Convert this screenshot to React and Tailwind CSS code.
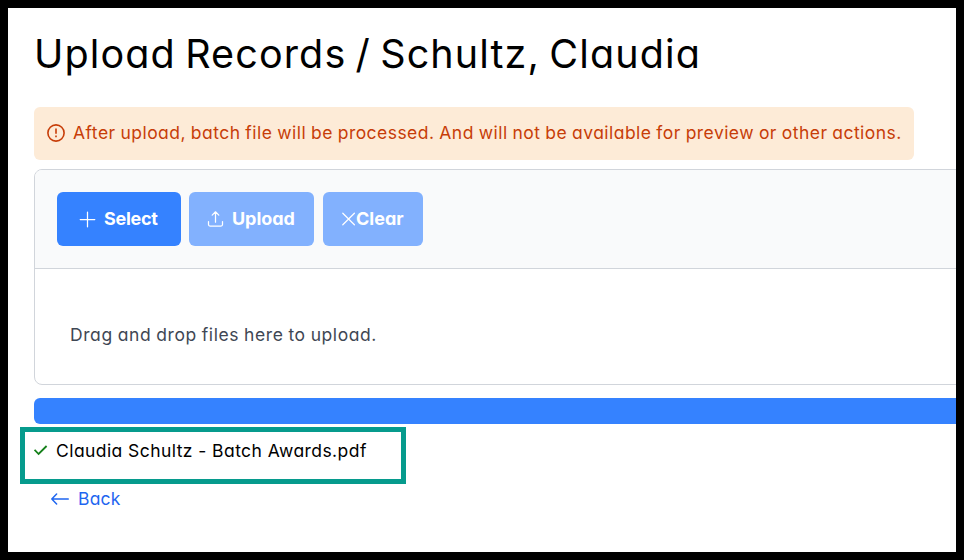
import clsx from 'clsx';

const ICONS = {
  plus: <path d="M8.5 1.2v14.6M1.2 8.5h14.6" />,
  upload: <path d="M1.5 10.5v3.1c0 .9.6 1.5 1.5 1.5h11c.9 0 1.5-.6 1.5-1.5v-3.1M8.5 11.2V1M5.2 4.1 8.5.8l3.3 3.3" />,
  times: <path d="M1.8 2.2l11.6 11.6M13.4 2.2L1.8 13.8" />,
};

function ActionButton({ icon, label, disabled, className, textClass }) {
  return (
    <button
      disabled={disabled}
      className={clsx(
        'flex h-[54px] items-center rounded-md text-white',
        disabled ? 'bg-[#82b1fe]' : 'bg-[#3582ff]',
        className
      )}
    >
      <svg
        viewBox="0 0 16 16"
        className="h-4 w-4 shrink-0 overflow-visible"
        fill="none"
        stroke="currentColor"
        strokeWidth="1.25"
        strokeLinecap="round"
        strokeLinejoin="round"
      >
        {ICONS[icon]}
      </svg>
      <span className={clsx('-mt-px whitespace-nowrap pb-px text-[18px] font-bold', textClass)}>
        {label}
      </span>
    </button>
  );
}

function Notice() {
  return (
    <div className="mt-[29px] flex h-[53px] w-[880px] items-center rounded-md bg-[#fdebd7] pl-[13px] text-[#c73d08]">
      <svg viewBox="0 0 18 18" className="-mt-px h-[18px] w-[18px] shrink-0" fill="none" stroke="currentColor" strokeWidth="1.6">
        <circle cx="9" cy="9" r="8.1" />
        <path d="M9 4.6v5.2M9 11.4v1.8" />
      </svg>
      <span className="ml-2 whitespace-nowrap text-[17.5px] tracking-[0.46px] [word-spacing:-0.5px]">
        After upload, batch file will be processed. And will not be available for preview or other actions.
      </span>
    </div>
  );
}

export default function App() {
  return (
    <div className="h-[560px] w-[964px] overflow-hidden border-8 border-black bg-white pl-[26px] font-['Inter',sans-serif] text-black [font-feature-settings:'cv11']">
      <h1 className="mt-[16px] h-[54px] whitespace-nowrap text-[39.5px] leading-[60px] font-normal tracking-[1.12px] [word-spacing:-3px]">
        Upload Records / Schultz, Claudia
      </h1>

      <Notice />

      <div className="mt-[9px] h-[216px] w-[960px] overflow-hidden rounded-lg border border-[#d1d5db]">
        <div className="flex h-[99px] items-start border-b border-[#d1d5db] bg-[#f9fafb] pt-[22px] pl-[22px]">
          <ActionButton icon="plus" label="Select" className="w-[124px] pl-[22px]" textClass="ml-[9px] tracking-[-0.3px]" />
          <ActionButton icon="upload" label="Upload" disabled className="ml-2 w-[125px] pl-[18px]" textClass="ml-[9px] tracking-[-0.05px]" />
          <ActionButton icon="times" label="Clear" disabled className="ml-[9px] w-[100px] pl-[18px]" textClass="-ml-px" />
        </div>
        <p className="mt-[52px] ml-[35px] text-[17.5px] leading-[27px] tracking-[0.58px] text-[#3f4754] [word-spacing:-0.5px]">
          Drag and drop files here to upload.
        </p>
      </div>

      <div className="mt-[13px] h-[26px] w-[960px] rounded-md bg-[#3582ff]" />

      <div className="mt-[3px] -ml-[14px] flex h-[57px] w-[386px] items-start border-[5px] border-[#069b8d] pt-[5px] pl-[9px]">
        <svg viewBox="0 0 14 12" className="mt-[7px] h-3 w-[14px] shrink-0" fill="none" stroke="#15801a" strokeWidth="1.8">
          <path d="M.6 5.8 4.6 10 12.6 2" />
        </svg>
        <span className="ml-2 whitespace-nowrap text-[17.5px] leading-[27px] tracking-[0.43px]">
          Claudia Schultz - Batch Awards.pdf
        </span>
      </div>

      <a href="#" className="mt-px ml-[17px] flex w-fit items-center text-[17.5px] leading-[27px] tracking-[0.2px] text-[#1f66f0]">
        <svg viewBox="0 0 18 12" className="h-3 w-[18px]" fill="none" stroke="currentColor" strokeWidth="1.5" strokeLinecap="round" strokeLinejoin="round">
          <path d="M17.3 6H.8M5.6 1.1.8 6l4.8 4.9" />
        </svg>
        <span className="ml-[9px]">Back</span>
      </a>
    </div>
  );
}
